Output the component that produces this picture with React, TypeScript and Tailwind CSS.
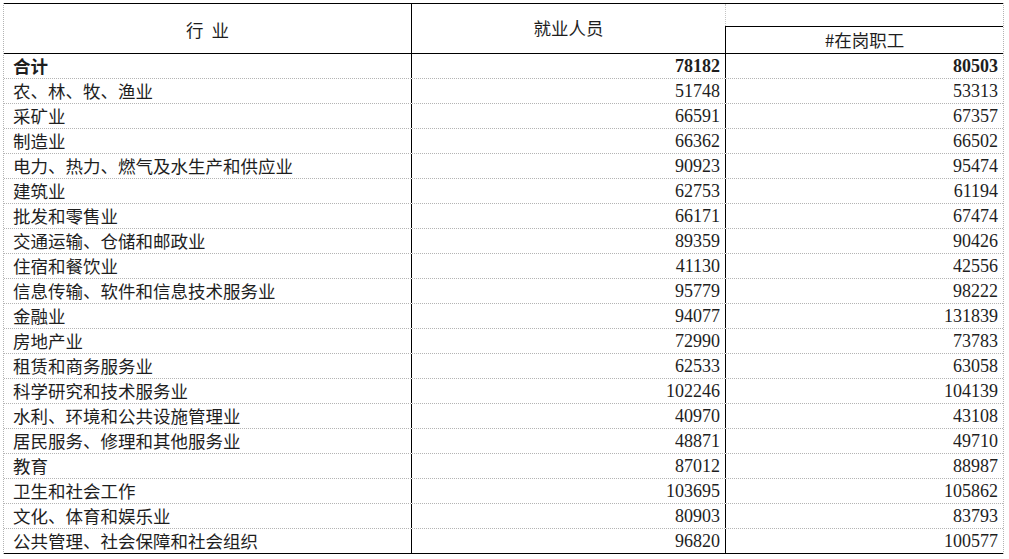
const rows: [string, string, string][] = [
    ["农、林、牧、渔业", "51748", "53313"],
    ["采矿业", "66591", "67357"],
    ["制造业", "66362", "66502"],
    ["电力、热力、燃气及水生产和供应业", "90923", "95474"],
    ["建筑业", "62753", "61194"],
    ["批发和零售业", "66171", "67474"],
    ["交通运输、仓储和邮政业", "89359", "90426"],
    ["住宿和餐饮业", "41130", "42556"],
    ["信息传输、软件和信息技术服务业", "95779", "98222"],
    ["金融业", "94077", "131839"],
    ["房地产业", "72990", "73783"],
    ["租赁和商务服务业", "62533", "63058"],
    ["科学研究和技术服务业", "102246", "104139"],
    ["水利、环境和公共设施管理业", "40970", "43108"],
    ["居民服务、修理和其他服务业", "48871", "49710"],
    ["教育", "87012", "88987"],
    ["卫生和社会工作", "103695", "105862"],
    ["文化、体育和娱乐业", "80903", "83793"],
    ["公共管理、社会保障和社会组织", "96820", "100577"],
];

const cjk = "font-['Noto_Sans_CJK_SC',sans-serif]";
const num = "font-['Liberation_Serif','Noto_Sans_CJK_SC',serif]";

function Row({ name, a, b, bold, last }: { name: string; a: string; b: string; bold?: boolean; last?: boolean }) {
    return (
        <div
            className={`flex h-[25px] border-b ${last ? "border-black" : "border-dotted border-[#b4b4b4]"} ${bold ? "font-bold" : ""}`}
        >
            <div className={`w-[408px] border-r border-black pl-[9px] flex items-center text-[17.5px] ${cjk}`}>
                {name}
            </div>
            <div className={`w-[314px] border-r border-black pr-[5px] flex items-center justify-end text-[18px] ${num}`}>
                {a}
            </div>
            <div className={`w-[277px] pr-[5px] flex items-center justify-end text-[18px] ${num}`}>{b}</div>
        </div>
    );
}

export default function App() {
    return (
        <div className="bg-white w-[1009px] h-[559px] overflow-hidden text-[#1e1e1e]">
            <div className="ml-[3px] mt-[3px] w-[1001px] border-l border-r border-dotted border-[#b4b4b4]">
                <div className={`flex h-[51px] border-t border-b border-black text-[17.5px] ${cjk}`}>
                    <div className="w-[408px] border-r border-black flex items-center justify-center pt-[3px]">
                        行&nbsp;&nbsp;业
                    </div>
                    <div className="w-[313px] flex items-center justify-center">就业人员</div>
                    <div className="w-[278px] flex flex-col">
                        <div className="h-[25px] border-l border-dotted border-[#c4c4c4]"></div>
                        <div className="flex-1 border-t border-l border-black flex items-center justify-center">
                            #在岗职工
                        </div>
                    </div>
                </div>
                <Row name="合计" a="78182" b="80503" bold />
                {rows.map((r, i) => (
                    <Row key={r[0]} name={r[0]} a={r[1]} b={r[2]} last={i === rows.length - 1} />
                ))}
            </div>
        </div>
    );
}
